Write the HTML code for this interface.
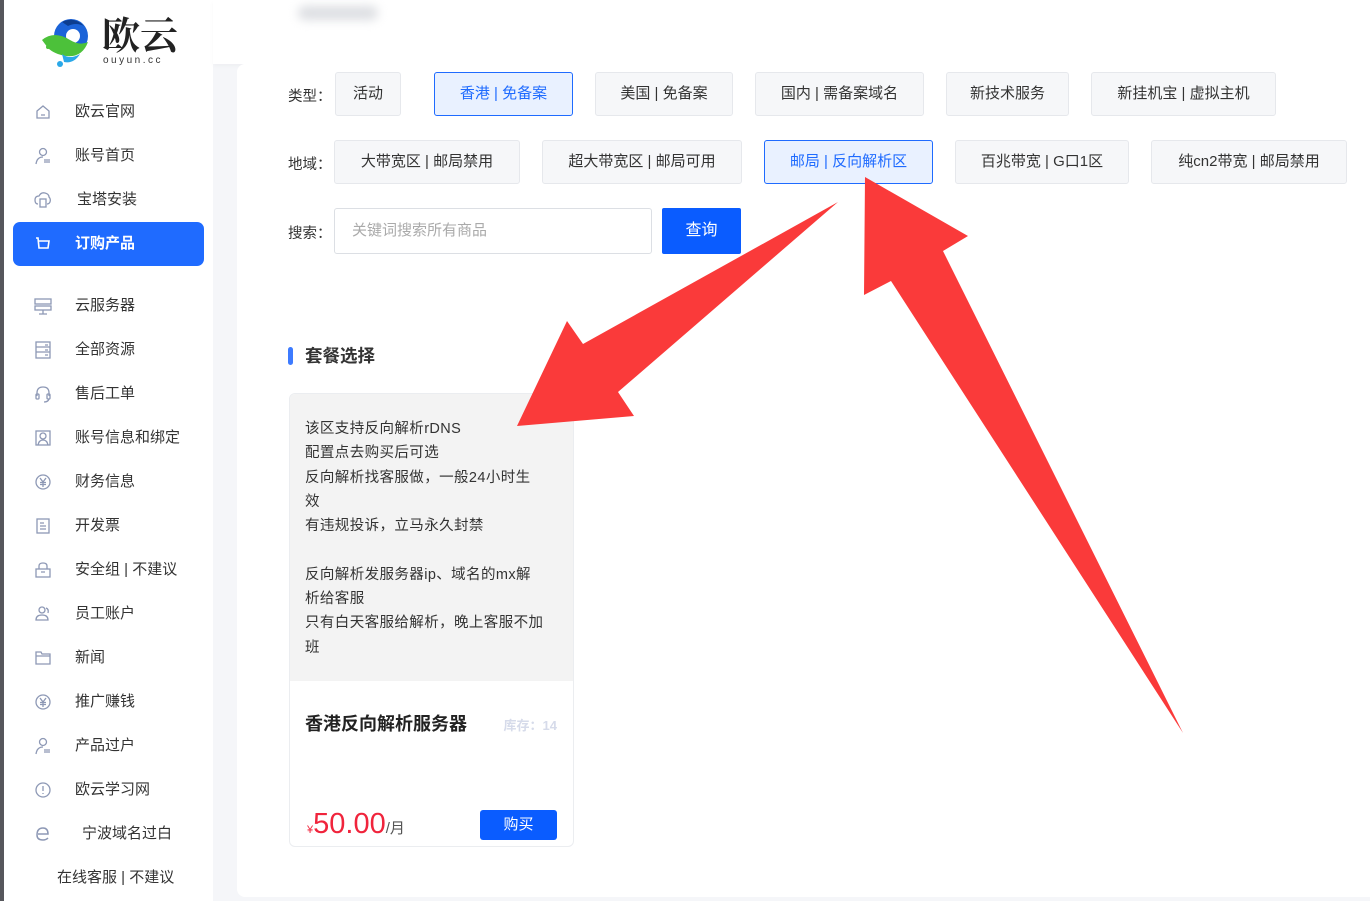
<!DOCTYPE html>
<html><head><meta charset="utf-8">
<style>
*{margin:0;padding:0;box-sizing:border-box}
body{width:1370px;height:901px;overflow:hidden;background:#f5f6f9;font-family:"Liberation Sans","Noto Sans CJK SC",sans-serif;color:#333;position:relative}
.strip{position:absolute;left:0;top:0;width:4px;height:901px;background:#56575c}
.side{position:absolute;left:4px;top:0;width:209px;height:901px;background:#fff}
.nav{position:absolute;left:0;font-size:15px;color:#333;height:20px;line-height:20px}
.nav svg{position:absolute;left:30px;top:1px}
.nav span{position:absolute;left:71px;white-space:nowrap}
.act{position:absolute;left:9px;top:222px;width:191px;height:44px;background:#1f6bff;border-radius:7px}
.header{position:absolute;left:213px;top:0;width:1157px;height:64px;background:#fff;box-shadow:0 2px 4px rgba(0,0,0,.03)}
.blur{position:absolute;left:85px;top:6px;width:80px;height:14px;border-radius:8px;background:#dcdee2;filter:blur(5px)}
.main{position:absolute;left:237px;top:64px;width:1140px;height:833px;background:#fff;border-radius:8px}
.lbl{position:absolute;left:288px;font-size:14.5px;color:#333}
.btn{position:absolute;height:44px;border:1px solid #e6e8ec;background:#f6f7f9;border-radius:3px;font-size:15px;color:#333;text-align:center;line-height:42px;white-space:nowrap}
.btn.on{border-color:#1f6bff;background:#e9f1ff;color:#1f6bff}
.inp{position:absolute;left:334px;top:208px;width:318px;height:46px;border:1px solid #dcdfe4;border-radius:3px;font-size:15px;color:#aaa;line-height:44px;padding-left:17px}
.q{position:absolute;left:662px;top:208px;width:79px;height:46px;background:#0a5cff;border-radius:2px;color:#fff;font-size:16px;text-align:center;line-height:46px}
.card{position:absolute;left:289px;top:393px;width:285px;height:454px;border:1px solid #ebedf0;border-radius:6px;overflow:hidden;background:#fff}
.card .top{height:287px;background:#f3f3f3;padding:23px 0 0 15px;font-size:14.5px;letter-spacing:0.4px;line-height:24.3px;color:#333;white-space:nowrap}
</style></head><body>
<div class="strip"></div>
<div class="side">
 <svg style="position:absolute;left:36px;top:14px" width="62" height="54" viewBox="0 0 62 54">
  <circle cx="31" cy="22" r="17" fill="#1b63d8"/>
  <path d="M22 8 Q34 2 44 12 Q36 8 28 12 Z" fill="#0c3d8f"/>
  <circle cx="33" cy="22" r="7" fill="#fff"/>
  <path d="M2 26 Q14 16 30 26 Q40 32 48 28 Q42 44 26 42 Q14 40 8 34 Z" fill="#4cc13a"/>
  <path d="M22 40 Q30 46 40 40 Q34 50 24 48 Z" fill="#2aa8e8"/>
  <circle cx="20" cy="50" r="3" fill="#2aa8e8"/><circle cx="8" cy="33" r="2" fill="#4cc13a"/>
 </svg>
 <div style="position:absolute;left:98px;top:10px;font-size:38px;font-weight:bold;font-family:'Noto Serif CJK SC',serif;color:#222;line-height:46px">欧云</div>
 <div style="position:absolute;left:99px;top:55px;font-size:10px;letter-spacing:2.5px;color:#333">ouyun.cc</div>
 <div class="act"></div>
 <div class="nav" style="top:102px;width:209px"><svg width="18" height="18" viewBox="0 0 18 18" fill="none" stroke="#8d98b5" stroke-width="1.3"><path d="M3 8 L9 3 L15 8 V15 H3 Z M7 12 H11"/></svg><span>欧云官网</span></div>
 <div class="nav" style="top:146px;width:209px"><svg width="18" height="18" viewBox="0 0 18 18" fill="none" stroke="#8d98b5" stroke-width="1.3"><circle cx="9" cy="5" r="3.5"/><path d="M2 17 Q3 10 9 10 M10 13 H16 M10 15 H16"/></svg><span>账号首页</span></div>
 <div class="nav" style="top:190px;width:209px"><svg width="18" height="18" viewBox="0 0 18 18" fill="none" stroke="#8d98b5" stroke-width="1.3"><path d="M4 13 Q1 13 1 9 Q1 5 5 5 Q7 1 11 2 Q15 3 15 6 Q17 8 16 11 Q15 13 13 13"/><rect x="6" y="8" width="6" height="8"/></svg><span style="left:73px">宝塔安装</span></div>
 <div class="nav" style="top:234px;width:209px;color:#fff;font-weight:bold"><svg width="18" height="18" viewBox="0 0 18 18" fill="none" stroke="#fff" stroke-width="1.6"><path d="M2 3 H4 L5 13 H14 L15 6 H5"/></svg><span>订购产品</span></div>
 <div class="nav" style="top:296px"><svg width="18" height="18" viewBox="0 0 18 18" fill="none" stroke="#8d98b5" stroke-width="1.3"><rect x="1" y="2" width="16" height="5"/><rect x="1" y="9" width="16" height="4"/><path d="M9 13 V17 M5 17 H13"/></svg><span>云服务器</span></div>
 <div class="nav" style="top:340px"><svg width="18" height="18" viewBox="0 0 18 18" fill="none" stroke="#8d98b5" stroke-width="1.3"><rect x="2" y="1" width="14" height="16"/><path d="M2 6 H16 M2 11 H16 M11 4 H14 M11 9 H14 M11 14 H14"/></svg><span>全部资源</span></div>
 <div class="nav" style="top:384px"><svg width="18" height="18" viewBox="0 0 18 18" fill="none" stroke="#8d98b5" stroke-width="1.3"><path d="M3 11 V8 Q3 2 9 2 Q15 2 15 8 V11"/><rect x="2" y="9" width="3" height="5" rx="1"/><rect x="13" y="9" width="3" height="5" rx="1"/><path d="M15 14 Q14 17 10 17"/></svg><span>售后工单</span></div>
 <div class="nav" style="top:428px"><svg width="18" height="18" viewBox="0 0 18 18" fill="none" stroke="#8d98b5" stroke-width="1.3"><rect x="2" y="2" width="14" height="14"/><circle cx="9" cy="7" r="3"/><path d="M4 16 Q5 11 9 11 Q13 11 14 16"/></svg><span>账号信息和绑定</span></div>
 <div class="nav" style="top:472px"><svg width="18" height="18" viewBox="0 0 18 18" fill="none" stroke="#8d98b5" stroke-width="1.3"><circle cx="9" cy="9" r="7"/><path d="M6 5 L9 9 L12 5 M9 9 V14 M6 9.5 H12 M6 11.5 H12"/></svg><span>财务信息</span></div>
 <div class="nav" style="top:516px"><svg width="18" height="18" viewBox="0 0 18 18" fill="none" stroke="#8d98b5" stroke-width="1.3"><rect x="3" y="2" width="12" height="14"/><path d="M6 6 H10 M6 9 H12 M6 12 H12"/></svg><span>开发票</span></div>
 <div class="nav" style="top:560px"><svg width="18" height="18" viewBox="0 0 18 18" fill="none" stroke="#8d98b5" stroke-width="1.3"><rect x="2" y="8" width="14" height="8"/><path d="M5 8 V5 Q5 2 9 2 Q13 2 13 5 V8 M7 11 H11"/></svg><span>安全组&nbsp;|&nbsp;不建议</span></div>
 <div class="nav" style="top:604px"><svg width="18" height="18" viewBox="0 0 18 18" fill="none" stroke="#8d98b5" stroke-width="1.3"><circle cx="8" cy="5" r="3"/><path d="M2 15 Q2 10 8 10 Q14 10 14 15 Z M12 3 Q15 4 14 8"/></svg><span>员工账户</span></div>
 <div class="nav" style="top:648px"><svg width="18" height="18" viewBox="0 0 18 18" fill="none" stroke="#8d98b5" stroke-width="1.3"><path d="M2 3 H7 L8 5 H16 V15 H2 Z M2 7 H16"/></svg><span>新闻</span></div>
 <div class="nav" style="top:692px"><svg width="18" height="18" viewBox="0 0 18 18" fill="none" stroke="#8d98b5" stroke-width="1.3"><circle cx="9" cy="9" r="7"/><path d="M6 5 L9 9 L12 5 M9 9 V14 M6 9.5 H12 M6 11.5 H12"/></svg><span>推广赚钱</span></div>
 <div class="nav" style="top:736px"><svg width="18" height="18" viewBox="0 0 18 18" fill="none" stroke="#8d98b5" stroke-width="1.3"><circle cx="9" cy="5" r="3.5"/><path d="M2 17 Q3 10 9 10 M10 13 H16 M10 15 H16"/></svg><span>产品过户</span></div>
 <div class="nav" style="top:780px"><svg width="18" height="18" viewBox="0 0 18 18" fill="none" stroke="#8d98b5" stroke-width="1.3"><circle cx="9" cy="9" r="7"/><path d="M9 5 V10 M9 12 V13"/></svg><span>欧云学习网</span></div>
 <div class="nav" style="top:824px"><svg width="18" height="18" viewBox="0 0 18 18" fill="none" stroke="#8d98b5" stroke-width="1.5"><path d="M4 9 H14 Q14 3 9 3 Q3 3 3 10 Q3 15 9 15 Q12 15 14 13"/></svg><span style="left:78px">宁波域名过白</span></div>
 <div class="nav" style="top:868px"><span style="left:53px">在线客服&nbsp;|&nbsp;不建议</span></div>
</div>
<div class="header"><div class="blur"></div></div>
<div class="main"></div>

<div class="lbl" style="top:85px">类型：</div>
<div class="btn" style="left:335px;top:72px;width:66px">活动</div>
<div class="btn on" style="left:434px;top:72px;width:139px">香港&nbsp;|&nbsp;免备案</div>
<div class="btn" style="left:595px;top:72px;width:138px">美国&nbsp;|&nbsp;免备案</div>
<div class="btn" style="left:755px;top:72px;width:169px">国内&nbsp;|&nbsp;需备案域名</div>
<div class="btn" style="left:946px;top:72px;width:123px">新技术服务</div>
<div class="btn" style="left:1091px;top:72px;width:185px">新挂机宝&nbsp;|&nbsp;虚拟主机</div>

<div class="lbl" style="top:153px">地域：</div>
<div class="btn" style="left:334px;top:140px;width:186px">大带宽区&nbsp;|&nbsp;邮局禁用</div>
<div class="btn" style="left:542px;top:140px;width:200px">超大带宽区&nbsp;|&nbsp;邮局可用</div>
<div class="btn on" style="left:764px;top:140px;width:169px">邮局&nbsp;|&nbsp;反向解析区</div>
<div class="btn" style="left:955px;top:140px;width:174px">百兆带宽&nbsp;|&nbsp;G口1区</div>
<div class="btn" style="left:1151px;top:140px;width:196px">纯cn2带宽&nbsp;|&nbsp;邮局禁用</div>

<div class="lbl" style="top:222px">搜索：</div>
<div class="inp">关键词搜索所有商品</div>
<div class="q">查询</div>

<div style="position:absolute;left:288px;top:347px;width:5px;height:18px;background:#3d7bff;border-radius:3px"></div>
<div style="position:absolute;left:305px;top:343px;font-size:17.5px;font-weight:bold;color:#333">套餐选择</div>

<div class="card">
 <div class="top">该区支持反向解析rDNS<br>配置点去购买后可选<br>反向解析找客服做，一般24小时生<br>效<br>有违规投诉，立马永久封禁<br><br>反向解析发服务器ip、域名的mx解<br>析给客服<br>只有白天客服给解析，晚上客服不加<br>班</div>
 <div style="position:absolute;left:15px;top:316px;font-size:18px;font-weight:bold;color:#222">香港反向解析服务器</div>
 <div style="position:absolute;right:16px;top:321px;font-size:13px;font-weight:bold;color:#d6dbea">库存：14</div>
 <div style="position:absolute;left:17px;top:414px;color:#f0243c;white-space:nowrap"><span style="font-size:11px">¥</span><span style="font-size:29px">50.00</span><span style="font-size:15px;color:#555">/月</span></div>
 <div style="position:absolute;left:190px;top:416px;width:77px;height:30px;background:#0a5cff;border-radius:3px;color:#fff;font-size:15px;text-align:center;line-height:30px">购买</div>
</div>

<svg style="position:absolute;left:0;top:0" width="1370" height="901">
 <polygon points="838,202 583,344 567,321 517,426 634,416 618,392" fill="#fa3a3a"/>
 <polygon points="865,177 968,236 943,251 1183,733 891,281 864,295" fill="#fa3a3a"/>
</svg>
</body></html>
